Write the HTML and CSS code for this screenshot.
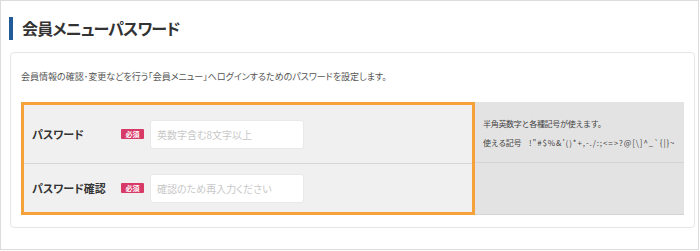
FILE: index.html
```html
<!DOCTYPE html>
<html lang="ja">
<head>
    <meta charset="UTF-8">
    <meta name="viewport" content="width=device-width, initial-scale=1.0">
    <title>会員メニューパスワード</title>
    <link rel="stylesheet" href="styles.css">
</head>
<body>
    <div class="frame">
        <h2 class="title">会員メニューパスワード</h2>
        <div class="card">
            <p class="lead">会員情報の確認･変更などを行う「会員メニュー」へログインするためのパスワードを設定します。</p>
            <div class="form">
                <div class="fields">
                    <div class="row">
                        <label class="label" for="pw">パスワード</label>
                        <span class="badge">必須</span>
                        <input class="input" type="password" id="pw" placeholder="英数字含む8文字以上">
                    </div>
                    <div class="row row-last">
                        <label class="label" for="pw2">パスワード確認</label>
                        <span class="badge">必須</span>
                        <input class="input" type="password" id="pw2" placeholder="確認のため再入力ください">
                    </div>
                </div>
                <div class="notes">
                    <div class="note">
                        <p>半角英数字と各種記号が使えます。</p>
                        <p>使える記号　<span class="symbols">!"#$%&amp;'()*+,-./:;&lt;=&gt;?@[\]^_`{|}~</span></p>
                    </div>
                    <div class="note note-last"></div>
                </div>
            </div>
        </div>
    </div>
</body>
</html>
```

FILE: styles.css
```css
body {
    margin: 0;
    font-family: "Noto Sans CJK JP", "Noto Sans", sans-serif;
    color: #333333;
    background-color: #ffffff;
}
.frame {
    width: 699px;
    height: 250px;
    box-sizing: border-box;
    border: 1px solid #dcdcdc;
    padding-top: 16px;
}
.title {
    margin: 0 0 0 8px;
    height: 23px;
    line-height: 23px;
    border-left: 4px solid #1f5c99;
    padding-left: 9px;
    font-size: 16px;
    font-weight: bold;
    letter-spacing: -0.8px;
    font-feature-settings: "palt";
    color: #333333;
}
.card {
    margin: 12px 0 0 9px;
    width: 685px;
    height: 176px;
    box-sizing: border-box;
    border: 1px solid #e6e6e6;
    border-radius: 4px;
    padding: 0 10px;
}
.lead {
    margin: 17px 0 0;
    font-size: 9px;
    line-height: 13px;
    font-feature-settings: "palt";
    color: #555555;
}
.form {
    display: grid;
    grid-template-columns: 454px 209px;
    margin-top: 19px;
}
.fields {
    border: 3px solid #f7a13a;
    background-color: #f0f0f0;
}
.row {
    display: flex;
    align-items: center;
    height: 58px;
    padding-left: 8px;
    border-bottom: 1px solid #d6d6d6;
}
.row-last {
    height: 48px;
    border-bottom: none;
}
.label {
    width: 89px;
    font-size: 11px;
    font-weight: bold;
    font-feature-settings: "palt";
    color: #333333;
}
.badge {
    width: 23px;
    height: 10px;
    line-height: 10px;
    background-color: #d83a68;
    color: #ffffff;
    font-size: 7px;
    font-weight: bold;
    text-align: center;
    border-radius: 1px;
}
.input {
    margin-left: 6px;
    width: 154px;
    height: 29px;
    box-sizing: border-box;
    border: 1px solid #e8e8e8;
    border-radius: 3px;
    background-color: #ffffff;
    padding: 0 6px;
    font-family: inherit;
    font-size: 10px;
    font-feature-settings: "palt";
    outline: none;
}
.input::placeholder {
    color: #c8c8c8;
}
.notes {
    display: flex;
    flex-direction: column;
    background-color: #e3e3e3;
    border-bottom: 1px solid #d4d4d4;
}
.note {
    height: 61px;
    box-sizing: border-box;
    padding: 12px 0 0 8px;
    border-bottom: 1px solid #d4d4d4;
}
.note p {
    margin: 0;
    font-size: 8px;
    line-height: 19px;
    letter-spacing: -0.3px;
    color: #444444;
}
.note .symbols {
    letter-spacing: 0.9px;
}
.note-last {
    flex: 1;
    height: auto;
    border-bottom: none;
}
```
